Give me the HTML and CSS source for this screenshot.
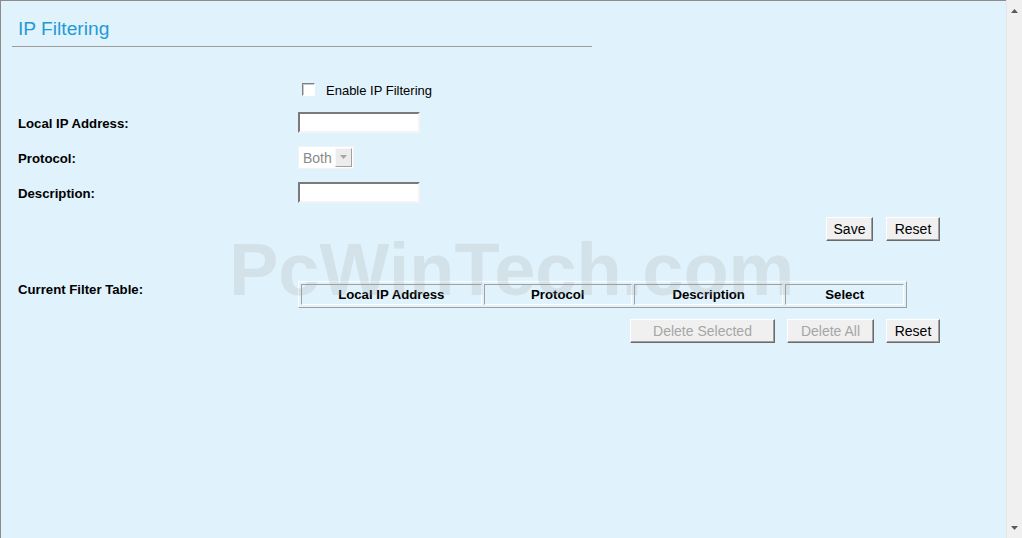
FILE: index.html
```html
<!DOCTYPE html>
<html lang="en">
<head>
  <meta charset="UTF-8">
  <title>IP Filtering</title>
  <link rel="stylesheet" href="styles.css">
</head>
<body>
  <div class="page">
    <div class="title-bar">IP Filtering</div>

    <form class="content">
      <div class="row row-first">
        <div class="label"></div>
        <label class="check-label"><input type="checkbox" class="check"> <span class="check-text">Enable IP Filtering</span></label>
      </div>
      <div class="row">
        <div class="label">Local IP Address:</div>
        <input type="text" class="text-input">
      </div>
      <div class="row">
        <div class="label">Protocol:</div>
        <div class="select-box">
          <select class="select" disabled>
            <option>Both</option>
          </select>
          <span class="select-arrow">
            <svg width="9" height="5" viewBox="0 0 9 5"><path d="M1 0h7L4.5 4z" fill="#a6a6a6"/></svg>
          </span>
        </div>
      </div>
      <div class="row">
        <div class="label">Description:</div>
        <input type="text" class="text-input">
      </div>

      <div class="button-row save-row">
        <button type="button" class="btn btn-save">Save</button>
        <button type="button" class="btn btn-reset">Reset</button>
      </div>

      <div class="table-row">
        <div class="label table-label">Current Filter Table:</div>
        <table class="filter-table">
          <thead>
            <tr>
              <th class="col-ip">Local IP Address</th>
              <th class="col-proto">Protocol</th>
              <th class="col-desc">Description</th>
              <th class="col-sel">Select</th>
            </tr>
          </thead>
          <tbody id="entries">
            <!-- filter rules go here -->
          </tbody>
        </table>
      </div>

      <div class="button-row delete-row">
        <button type="button" class="btn btn-wide" disabled>Delete Selected</button>
        <button type="button" class="btn btn-mid" disabled>Delete All</button>
        <button type="button" class="btn btn-reset">Reset</button>
      </div>
    </form>

    <div class="watermark">PcWinTech.com</div>
  </div>

  <div class="scrollbar">
    <svg class="arrow-up" width="7" height="4" viewBox="0 0 7 4"><path d="M3.5 0L7 4H0z" fill="#5a5a5a"/></svg>
    <svg class="arrow-down" width="7" height="4" viewBox="0 0 7 4"><path d="M0 0h7L3.5 4z" fill="#5a5a5a"/></svg>
  </div>
</body>
</html>
```

FILE: styles.css
```css
/* Router page, old school form look */
body {
  margin: 0;
  display: flex;
  height: 100vh;
  overflow: hidden;
  font-family: "Liberation Sans", Arial, sans-serif;
  color: #000;
}
.page {
  position: relative;
  flex: 1;
  background-color: #e0f2fc;
  border-left: 1px solid #8c8c8c;
  border-top: 1px solid #8c8c8c;
}
.title-bar {
  margin-left: 11px;
  width: 574px;
  padding: 17px 0 6px 6px;
  font-size: 19.2px;
  line-height: 22px;
  color: #1f9ad6;
  border-bottom: 1px solid #9c9c9c;
}
.content {
  width: 922px;
  margin: 25px 0 0 17px;
}
.row {
  display: flex;
  align-items: center;
  height: 35px;
}
.row-first {
  height: 31px;
  padding-top: 2px;
}
.label {
  width: 280px;
  font-size: 13.2px;
  font-weight: bold;
  line-height: 15px;
}
.row .label {
  padding-top: 2px;
}
.check-label {
  display: flex;
  align-items: center;
  font-size: 13px;
}
.check-text {
  padding-top: 2px;
}
.check {
  appearance: none;
  width: 13px;
  height: 13px;
  margin: 0 11px 0 4px;
  background: #ffffff;
  border: 1px solid;
  border-color: #808080 #ffffff #ffffff #808080;
  box-shadow: inset 1px 1px 0 #c8c8c8;
}
.text-input {
  box-sizing: border-box;
  width: 122px;
  height: 21px;
  padding: 0 2px;
  margin: 0;
  background: #ffffff;
  border: 2px solid;
  border-color: #7a7a7a #f4f4f4 #f4f4f4 #7a7a7a;
  font-family: inherit;
  font-size: 13px;
}

/* disabled drop-down */
.select-box {
  display: flex;
  align-items: center;
  width: 54px;
  height: 21px;
  background: #ffffff;
  border: 1px solid #f2f2f2;
}
.select {
  appearance: none;
  flex: 1;
  width: 34px;
  padding: 0 0 0 4px;
  border: none;
  background: transparent;
  font-family: inherit;
  font-size: 14px;
  color: #8a8a8a;
  opacity: 1;
}
.select-arrow {
  display: flex;
  align-items: center;
  justify-content: center;
  width: 15px;
  height: 17px;
  margin-right: 1px;
  background: #ececec;
  border: 1px solid;
  border-color: #f8f8f8 #a0a0a0 #a0a0a0 #f8f8f8;
}

/* buttons */
.button-row {
  display: flex;
  justify-content: flex-end;
  gap: 12px;
}
.save-row {
  margin-top: 7px;
  gap: 13px;
}
.btn {
  height: 24px;
  padding: 0;
  font-family: inherit;
  font-size: 14px;
  color: #000;
  background: #f0f0f0;
  border: 1px solid;
  border-color: #ffffff #6a6a6a #6a6a6a #ffffff;
  box-shadow: inset -1px -1px 0 #a0a0a0;
  cursor: pointer;
}
.btn-save {
  width: 47px;
}
.btn-reset {
  width: 54px;
}
.btn-wide {
  width: 145px;
}
.btn-mid {
  width: 87px;
}
.btn:disabled {
  color: #a6a6a6;
  cursor: default;
}

/* filter table */
.table-row {
  display: flex;
  align-items: flex-start;
  margin-top: 40px;
}
.table-label {
  margin-top: 1px;
}
.filter-table {
  width: 609px;
  border-spacing: 2px;
  border: 1px solid;
  border-color: #ffffff #a0a0a0 #a0a0a0 #ffffff;
}
.filter-table th {
  height: 19px;
  padding: 0;
  font-size: 13.2px;
  font-weight: bold;
  text-align: center;
  white-space: nowrap;
  border: 1px solid;
  border-color: #a0a0a0 #ffffff #ffffff #a0a0a0;
}
.col-ip { width: 180px; }
.col-proto { width: 148px; }
.col-desc { width: 149px; }
.col-sel { width: 118px; }
.delete-row {
  margin-top: 11px;
}

.watermark {
  position: absolute;
  left: 228px;
  top: 232px;
  font-size: 74px;
  font-weight: bold;
  line-height: 74px;
  color: rgba(160, 160, 160, 0.2);
  pointer-events: none;
  white-space: nowrap;
}

/* fake disabled scrollbar */
.scrollbar {
  width: 15px;
  display: flex;
  flex-direction: column;
  justify-content: space-between;
  align-items: center;
  padding: 9px 0 8px;
  background: #f0f0f0;
  border-left: 1px solid #e6e6e6;
}
```
